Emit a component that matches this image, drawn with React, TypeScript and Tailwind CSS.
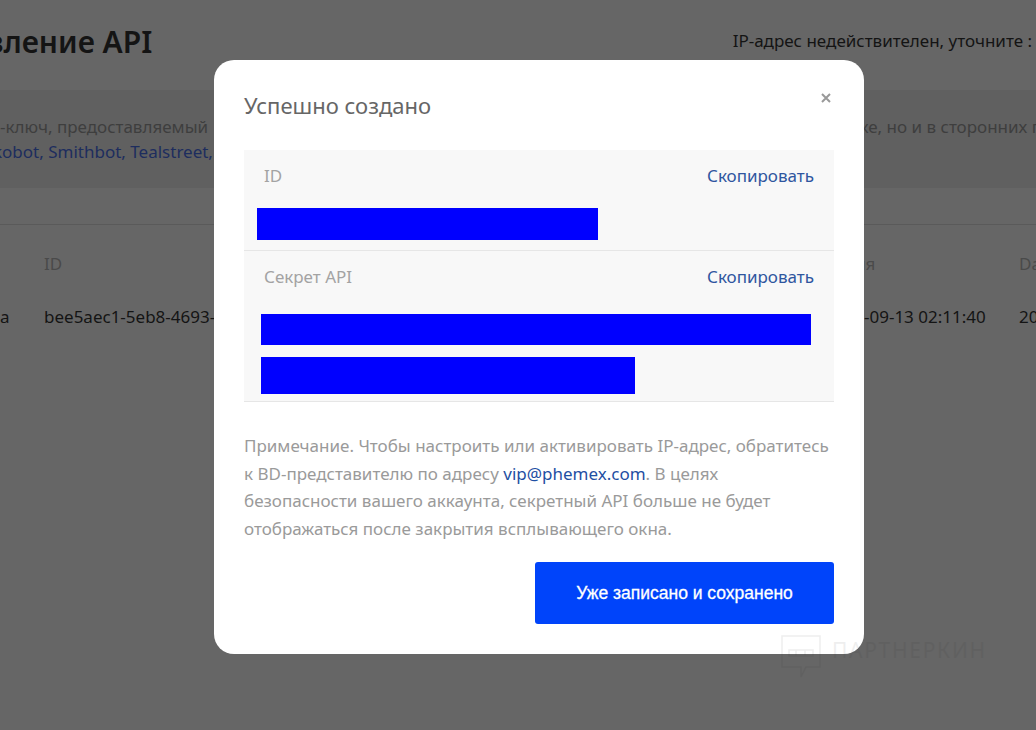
const font = "font-['Noto_Sans','Liberation_Sans',sans-serif]";

function SecretRow({ label, children }: { label: string; children: React.ReactNode }) {
  return (
    <div className="border-b border-[#e6e6e6] bg-[#f8f8f8]">
      <div className="flex items-center justify-between px-5 pt-[13px] text-[17px] leading-[26px]">
        <span className="text-[#a3a3a3]">{label}</span>
        <a className="text-[#2f569f]">Скопировать</a>
      </div>
      {children}
    </div>
  );
}

export default function App() {
  return (
    <div className={`relative h-[730px] w-[1036px] overflow-hidden bg-[#666666] ${font}`}>
      {/* Page behind the dimmed overlay */}
      <div className="flex items-start justify-between pt-[22px] pr-[4px]">
        <h1 className="-ml-[88px] whitespace-nowrap text-[30px] leading-10 font-semibold text-[#141414]">
          Управление API
        </h1>
        <span className="mt-[7px] whitespace-nowrap text-[17px] leading-6 text-[#141414]">
          IP-адрес недействителен, уточните :
        </span>
      </div>
      <div className="mt-[28px] h-[98px] overflow-hidden bg-[#606060] pt-[24px] text-[17px] leading-[25px] text-[#3e3e3e]">
        <div className="flex justify-between whitespace-nowrap">
          <span>-ключ, предоставляемый</span>
          <span className="-mr-[6px]">ке, но и в сторонних п</span>
        </div>
        <div className="-ml-[7px] whitespace-nowrap text-[#1d2d5e]">
          kobot, Smithbot, Tealstreet,
        </div>
      </div>
      <div className="mt-[36px] border-t border-[#5a5a5a] pt-[27px]">
        <div className="grid grid-cols-[44px_820px_155px_1fr] text-[17px] leading-6 whitespace-nowrap text-[#4a4a4a]">
          <span />
          <span>ID</span>
          <span className="-ml-[9px]">ия</span>
          <span>Da</span>
        </div>
        <div className="mt-[29px] grid grid-cols-[44px_820px_155px_1fr] text-[17px] leading-6 whitespace-nowrap text-[#141414]">
          <span>a</span>
          <span>bee5aec1-5eb8-4693-</span>
          <span>-09-13 02:11:40</span>
          <span>20</span>
        </div>
      </div>

      {/* Modal over the page */}
      <div className="absolute inset-0 pt-[60px] pl-[214px]">
        <div className="relative h-[594px] w-[650px] rounded-[20px] bg-white px-[30px] pt-[29px]">
          <h2 className="text-[22px] leading-[33px] text-[#666666]">Успешно создано</h2>
          <svg className="absolute top-[33px] right-[33px]" width="10" height="10" viewBox="0 0 10 10" stroke="#999999" strokeWidth="2">
            <path d="M1 1l8 8M9 1l-8 8" />
          </svg>
          <div className="mt-[28px]">
            <SecretRow label="ID">
              <div className="mt-[19px] mb-[10px] ml-[13px] h-[32px] w-[341px] bg-[#0000ff]" />
            </SecretRow>
            <SecretRow label="Секрет API">
              <div className="mt-[24px] ml-[17px] h-[31px] w-[550px] bg-[#0000ff]" />
              <div className="mt-[12px] mb-[7px] ml-[17px] h-[37px] w-[374px] bg-[#0000ff]" />
            </SecretRow>
          </div>
          <p className="mt-[30px] text-[17px] leading-[27.5px] text-[#9a9a9a]">
            Примечание. Чтобы настроить или активировать IP-адрес, обратитесь к BD-представителю по адресу{" "}
            <a className="text-[#1f4fa3]">vip@phemex.com</a>. В целях безопасности вашего аккаунта, секретный API больше не будет отображаться после закрытия всплывающего окна.
          </p>
          <div className="mt-[20px] flex justify-end">
            <button className="h-[62px] w-[299px] rounded-[3px] bg-[#0044fa] font-['Liberation_Sans',sans-serif] text-[17.5px] text-white [-webkit-text-stroke:0.3px_white]">
              Уже записано и сохранено
            </button>
          </div>
        </div>
      </div>

      {/* Watermark */}
      <div className="absolute top-[635px] left-[781px] flex items-start gap-[11px] opacity-[0.07]">
        <svg width="40" height="44" viewBox="0 0 40 44" fill="none" stroke="#222222" strokeWidth="1.5">
          <path d="M1 1h38v31H25l-5 10v-10H1z" />
          <path d="M8 15h24v6H8z" />
          <path d="M15 15v6M24 15v6" />
        </svg>
        <span className="mt-[3px] text-[21px] leading-6 tracking-[1.7px] whitespace-nowrap text-[#222222]">ПАРТНЕРКИН</span>
      </div>
    </div>
  );
}
